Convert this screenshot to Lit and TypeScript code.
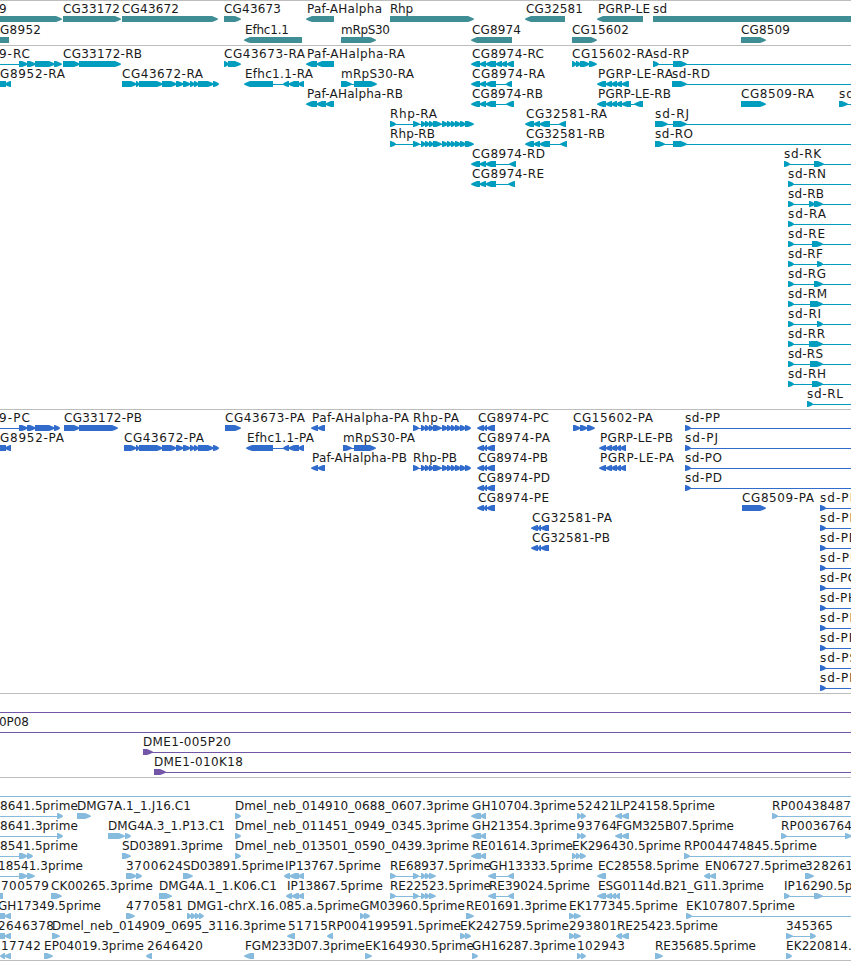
import { LitElement, svg, html, css } from 'lit';
import { customElement, property } from 'lit/decorators.js';

type Span = [number, number];

interface Feature {
  row: number;
  x: number;
  // right edge of the label, may lie out of view
  right: number;
  label: string;
  dir: 1 | -1;
  spans: Span[];
  from?: number;
  to?: number;
}

interface Track {
  color: string;
  height: number;
  pitch: number;
  features: Feature[];
}

const VIEW = 851;
const OUT = 860;
const LEFT = -20;

// "19-27 27-35" -> [[19, 27], [27, 35]]; "<" is the left side out of view
const parse = (s: string): Span[] =>
  s.split(' ').filter(Boolean).map((p) => {
    const [a, b] = p.split('-');
    return [a === '<' ? LEFT : +a, +b] as Span;
  });

const fwd = (row: number, x: number, right: number, label: string, spans: string, to?: number, from?: number): Feature =>
  ({ row, x, right, label, dir: 1, spans: parse(spans), to, from });

const rev = (row: number, x: number, right: number, label: string, spans: string): Feature =>
  ({ row, x, right, label, dir: -1, spans: parse(spans) });

const genes: Feature[] = [
  fwd(0, -1, 7, '9', '<-61'),
  fwd(0, 63, 120, 'CG33172', '63-120'),
  fwd(0, 122, 179, 'CG43672', '122-217'),
  fwd(0, 224, 281, 'CG43673', '224-240'),
  rev(0, 307, 382, 'Paf-AHalpha', '307-334'),
  fwd(0, 390, 413, 'Rhp', '390-473'),
  rev(0, 526, 583, 'CG32581', '526-565'),
  rev(0, 598, 650, 'PGRP-LE', '598-643'),
  fwd(0, 653, 667, 'sd', '653-860'),
  rev(1, 0, 41, 'G8952', '<-9'),
  rev(1, 245, 289, 'Efhc1.1', '245-302'),
  fwd(1, 341, 390, 'mRpS30', '341-375'),
  rev(1, 472, 521, 'CG8974', '472-512'),
  fwd(1, 572, 629, 'CG15602', '572-596'),
  fwd(1, 741, 790, 'CG8509', '741-765'),
];

const rhp = '421-425 425-429 429-433 433-441 442-447 447-451 451-455 455-460 460-465';
const cg43672 = '136-139 139-162 162-176 176-183 183-190 190-194 194-198 198-213 213-218';
const cg8974 = '472-480 480-486 486-496';
const pgrp = '606-612 612-617';

const transcripts: Feature[] = [
  fwd(0, -1, 30, '9-RC', '19-27 27-35 35-54 54-61', undefined, LEFT),
  fwd(0, 63, 142, 'CG33172-RB', '63-79 79-120'),
  fwd(0, 224, 305, 'CG43673-RA', '224-228 228-240'),
  rev(0, 307, 405, 'Paf-AHalpha-RA', '307-317 317-334'),
  rev(0, 472, 544, 'CG8974-RC', `${cg8974} 496-502 502-507 507-514`),
  fwd(0, 572, 653, 'CG15602-RA', '572-576 576-580 580-589 589-596'),
  fwd(0, 653, 689, 'sd-RP', '653-658 673-686', OUT),
  rev(1, 0, 65, 'G8952-RA', '<-6 6-11'),
  fwd(1, 122, 203, 'CG43672-RA', `122-136 ${cg43672}`),
  rev(1, 245, 313, 'Efhc1.1-RA', '245-273 284-289 289-299 299-304'),
  fwd(1, 341, 414, 'mRpS30-RA', '341-351 354-376'),
  rev(1, 472, 545, 'CG8974-RA', `${cg8974} 507-512`),
  rev(1, 598, 673, 'PGRP-LE-RA', `598-606 ${pgrp} 617-622 622-629`),
  fwd(1, 672, 710, 'sd-RD', '672-686', OUT),
  rev(2, 307, 403, 'Paf-AHalpha-RB', '307-317 317-326 326-334'),
  rev(2, 472, 543, 'CG8974-RB', `${cg8974} 507-514`),
  rev(2, 598, 671, 'PGRP-LE-RB', `598-606 ${pgrp} 617-622 622-631 635-643`),
  fwd(2, 741, 814, 'CG8509-RA', '741-765'),
  fwd(2, 839, 877, 'sd-RC', '839-847', OUT),
  fwd(3, 390, 437, 'Rhp-RA', `390-395 413-419 ${rhp} 465-473`),
  rev(3, 526, 607, 'CG32581-RA', '526-534 534-540 540-550 560-566'),
  fwd(3, 655, 689, 'sd-RJ', '655-667 673-686', OUT),
  fwd(4, 390, 435, 'Rhp-RB', `390-395 413-419 ${rhp} 465-473`),
  rev(4, 526, 605, 'CG32581-RB', '526-534 534-540 540-550 561-567'),
  fwd(4, 655, 693, 'sd-RO', '655-664 673-686', OUT),
  rev(5, 472, 545, 'CG8974-RD', `${cg8974} 510-516`),
  fwd(5, 784, 821, 'sd-RK', '784-789 814-823', OUT),
  rev(6, 472, 544, 'CG8974-RE', `${cg8974} 509-515`),
  fwd(6, 788, 826, 'sd-RN', '788-793', OUT),
  fwd(7, 788, 824, 'sd-RB', '788-793 809-814 814-822', OUT),
  fwd(8, 788, 826, 'sd-RA', '788-793', OUT),
  fwd(9, 788, 825, 'sd-RE', '788-793 812-822', OUT),
  fwd(10, 788, 823, 'sd-RF', '788-793 817-822', OUT),
  fwd(11, 788, 826, 'sd-RG', '788-793 814-822', OUT),
  fwd(12, 788, 827, 'sd-RM', '788-793 810-822', OUT),
  fwd(13, 788, 821, 'sd-RI', '788-793 817-822', OUT),
  fwd(14, 788, 825, 'sd-RR', '788-793 809-813 811-822', OUT),
  fwd(15, 788, 823, 'sd-RS', '788-793 810-822', OUT),
  fwd(16, 788, 826, 'sd-RH', '788-793 812-822', OUT),
  fwd(17, 807, 843, 'sd-RL', '807-812', OUT),
];

const proteins: Feature[] = [
  fwd(0, -1, 30, '9-PC', '19-27 27-35 35-54 54-59', undefined, LEFT),
  fwd(0, 64, 142, 'CG33172-PB', '64-79 79-117'),
  fwd(0, 225, 305, 'CG43673-PA', '225-240'),
  rev(0, 312, 409, 'Paf-AHalpha-PA', '312-318 318-325'),
  fwd(0, 413, 459, 'Rhp-PA', `413-418 ${rhp} 465-470`),
  rev(0, 478, 549, 'CG8974-PC', '478-484 484-487 487-495'),
  fwd(0, 573, 653, 'CG15602-PA', '573-580 580-587 587-594'),
  fwd(0, 685, 720, 'sd-PP', '685-690', OUT),
  rev(1, 0, 64, 'G8952-PA', '<-6 6-11'),
  fwd(1, 124, 204, 'CG43672-PA', `124-136 ${cg43672}`),
  rev(1, 247, 314, 'Efhc1.1-PA', '247-273 284-289 289-299 299-304'),
  fwd(1, 343, 415, 'mRpS30-PA', '343-351 354-375'),
  rev(1, 478, 550, 'CG8974-PA', '478-484 484-487 487-495'),
  rev(1, 600, 673, 'PGRP-LE-PB', `600-606 ${pgrp} 617-621 621-626`),
  fwd(1, 685, 718, 'sd-PJ', '685-690', OUT),
  rev(2, 312, 407, 'Paf-AHalpha-PB', '312-318 318-325'),
  fwd(2, 413, 457, 'Rhp-PB', `413-418 ${rhp} 465-470`),
  rev(2, 478, 548, 'CG8974-PB', '478-484 484-487 487-495'),
  rev(2, 600, 674, 'PGRP-LE-PA', `600-606 ${pgrp} 617-621 621-626`),
  fwd(2, 685, 722, 'sd-PO', '685-690', OUT),
  rev(3, 478, 550, 'CG8974-PD', '478-484 484-487 487-495'),
  fwd(3, 685, 722, 'sd-PD', '685-690', OUT),
  rev(4, 478, 549, 'CG8974-PE', '478-484 484-487 487-495'),
  fwd(4, 742, 814, 'CG8509-PA', '742-765'),
  rev(5, 532, 612, 'CG32581-PA', '532-538 538-541 541-549'),
  rev(6, 532, 610, 'CG32581-PB', '532-538 538-541 541-549'),
  ...['M', 'E', 'B', 'F', 'G', 'H', 'I', 'R', 'S', 'K'].map((c, i) =>
    fwd(4 + i, 820, c === 'I' ? 853 : c === 'M' ? 860 : 857, `sd-P${c}`, '820-825', OUT)),
];

const clones: Feature[] = [
  fwd(0, 0, 0, '', '', OUT, LEFT),
  fwd(1, -1, 29, '0P08', '', OUT, LEFT),
  fwd(2, 143, 231, 'DME1-005P20', '143-152', OUT),
  fwd(3, 154, 243, 'DME1-010K18', '154-165', OUT),
];

const ests: Feature[] = [
  fwd(0, 0, 0, '', '', OUT, LEFT),
  fwd(1, 0, 78, '8641.5prime', '57-62', undefined, LEFT),
  fwd(1, 77, 191, 'DMG7A.1_1.J16.C1', '77-90'),
  fwd(1, 235, 469, 'Dmel_neb_014910_0688_0607.3prime', '235-240'),
  rev(1, 472, 576, 'GH10704.3prime', '472-481 481-486'),
  fwd(1, 577, 617, '52421', '577-581 581-585'),
  rev(1, 616, 715, 'LP24158.5prime', '616-622 622-629'),
  fwd(1, 772, 851, 'RP00438487', '772-777', OUT),
  fwd(2, 0, 78, '8641.3prime', '57-62', undefined, LEFT),
  fwd(2, 108, 225, 'DMG4A.3_1.P13.C1', '108-124 125-130'),
  fwd(2, 235, 469, 'Dmel_neb_011451_0949_0345.3prime', '235-240'),
  rev(2, 472, 576, 'GH21354.3prime', '472-481 481-486'),
  fwd(2, 577, 617, '93764', '577-581 581-585'),
  rev(2, 616, 734, 'FGM325B07.5prime', '616-622 622-629'),
  fwd(2, 781, 852, 'RP0036764', '781-786 845-851', OUT),
  fwd(3, 0, 78, '8541.5prime', '19-27 27-32', undefined, LEFT),
  fwd(3, 122, 223, 'SD03891.3prime', '122-130'),
  fwd(3, 235, 469, 'Dmel_neb_013501_0590_0439.3prime', '235-240'),
  rev(3, 472, 573, 'RE01614.3prime', '472-481 481-486'),
  fwd(3, 572, 681, 'EK296430.5prime', '572-576 576-580 580-585'),
  fwd(3, 684, 817, 'RP004474845.5prime', '684-689', OUT),
  fwd(4, -2, 83, '18541.3prime', '19-27 27-34', undefined, LEFT),
  fwd(4, 126, 183, '3700624', '126-136 136-141'),
  fwd(4, 183, 284, 'SD03891.5prime', '183-192'),
  rev(4, 285, 381, 'IP13767.5prime', '285-290 290-299 299-304'),
  fwd(4, 390, 491, 'RE68937.5prime', '390-395 413-418 421-425 425-429 429-435'),
  rev(4, 489, 593, 'GH13333.5prime', '489-496 509-514'),
  rev(4, 598, 699, 'EC28558.5prime', '598-606'),
  rev(4, 705, 807, 'EN06727.5prime', '705-710 710-716'),
  fwd(4, 805, 853, '328261', '805-813'),
  rev(5, 1, 49, '700579', '<-3'),
  fwd(5, 51, 153, 'CK00265.3prime', '51-61'),
  fwd(5, 159, 277, 'DMG4A.1_1.K06.C1', '159-171'),
  rev(5, 287, 383, 'IP13867.5prime', '287-292 292-299 299-304'),
  fwd(5, 390, 491, 'RE22523.5prime', '390-395 413-418 421-425 425-429 429-435'),
  rev(5, 489, 590, 'RE39024.5prime', '489-496 509-514'),
  rev(5, 598, 764, 'ESG0114d.B21_G11.3prime', '598-606 606-612 612-616 616-620'),
  fwd(5, 784, 880, 'IP16290.5prime', '784-789 814-822', OUT),
  rev(6, -2, 101, 'GH17349.5prime', '<-5 5-11'),
  fwd(6, 126, 183, '4770581', '126-134'),
  fwd(6, 187, 360, 'DMG1-chrX.16.085.a.5prime', '187-191 191-195 195-199 199-203'),
  fwd(6, 360, 465, 'GM03960.5prime', '360-364 364-369'),
  fwd(6, 466, 567, 'RE01691.3prime', '466-473'),
  fwd(6, 569, 678, 'EK177345.5prime', '569-574 574-580'),
  fwd(6, 686, 795, 'EK107807.5prime', '686-691', OUT),
  rev(7, -2, 54, '2646378', '<-5 5-11'),
  fwd(7, 52, 286, 'Dmel_neb_014909_0695_3116.3prime', '52-59'),
  rev(7, 288, 328, '51715', '288-295'),
  rev(7, 328, 461, 'RP004199591.5prime', '328-333'),
  fwd(7, 460, 569, 'EK242759.5prime', '460-465 465-470'),
  fwd(7, 569, 617, '293801', '569-574 574-580'),
  rev(7, 617, 718, 'RE25423.5prime', '617-622 622-629'),
  fwd(7, 786, 833, '345365', '786-792 810-815'),
  rev(8, 1, 41, '17742', '1-5 5-11'),
  fwd(8, 44, 144, 'EP04019.3prime', '44-52'),
  rev(8, 147, 203, '2646420', '147-152'),
  rev(8, 245, 365, 'FGM233D07.3prime', '245-254'),
  fwd(8, 365, 474, 'EK164930.5prime', '365-371'),
  fwd(8, 472, 576, 'GH16287.3prime', '472-477'),
  fwd(8, 577, 625, '102943', '577-581 581-585'),
  fwd(8, 655, 756, 'RE35685.5prime', '655-662'),
  fwd(8, 786, 895, 'EK220814.5prime', '786-791'),
];

const tracks: Track[] = [
  { color: '#3f8e95', height: 45, pitch: 21, features: genes },
  { color: '#009dbe', height: 364, pitch: 20, features: transcripts },
  { color: '#316ccc', height: 284, pitch: 20, features: proteins },
  { color: '#7456a8', height: 84, pitch: 20, features: clones },
  { color: '#86bbdd', height: 183, pitch: 20, features: ests },
];

@customElement('feature-track')
export class FeatureTrack extends LitElement {
  @property({ attribute: false }) track!: Track;

  static styles = css`
    :host {
      display: block;
      border-top: 1px solid #bdbdbd;
      box-sizing: border-box;
      overflow: hidden;
    }
    svg {
      display: block;
    }
    text {
      font-family: 'DejaVu Sans', sans-serif;
      font-size: 12px;
      fill: #1a1a1a;
      white-space: pre;
    }
  `;

  // box with a blunt arrow head on the side of the strand
  private exon([a, b]: Span, dir: number, y: number) {
    const [tail, tip] = dir > 0 ? [a, b] : [b, a];
    const head = Math.min(b - a - 1, 5);
    const neck = tip - dir * head;
    const nose = tip + dir;
    const mid = tip - dir * Math.max(head - 3, 1);
    const points = [
      [tail, y],
      [neck, y],
      [mid, y + 1.2],
      [nose, y + 2.7],
      [nose, y + 3.6],
      [mid, y + 4.9],
      [neck, y + 6],
      [tail, y + 6],
    ];
    return svg`<polygon points=${points.join(' ')}></polygon>`;
  }

  private feature(f: Feature) {
    // one pixel of the track box is its top border
    const top = f.row * this.track.pitch;
    const start = f.from ?? f.spans[0][0];
    const end = f.to ?? f.spans[f.spans.length - 1][1];
    return svg`
      <rect x=${start} y=${top + 18} width=${end - start} height="1"></rect>
      ${f.spans.map((s) => this.exon(s, f.dir, top + 15))}
    `;
  }

  private label(f: Feature) {
    if (!f.label) return null;
    const y = f.row * this.track.pitch + 12;
    return svg`<text x=${f.x} y=${y} textLength=${f.right - f.x}>${f.label}</text>`;
  }

  render() {
    const { features, color, height } = this.track;
    return html`
      <svg width=${VIEW} height=${height - 1} fill=${color}>
        ${features.map((f) => this.feature(f))}
        ${features.map((f) => this.label(f))}
      </svg>
    `;
  }
}

@customElement('app-root')
export class AppRoot extends LitElement {
  static styles = css`
    :host {
      display: flex;
      flex-direction: column;
      width: 851px;
      height: 961px;
      box-sizing: border-box;
      overflow: hidden;
      background: #fff;
      border-bottom: 1px solid #bdbdbd;
    }
    feature-track {
      flex: none;
    }
  `;

  render() {
    return tracks.map((t) => html`<feature-track .track=${t}></feature-track>`);
  }
}

declare global {
  interface HTMLElementTagNameMap {
    'app-root': AppRoot;
    'feature-track': FeatureTrack;
  }
}
